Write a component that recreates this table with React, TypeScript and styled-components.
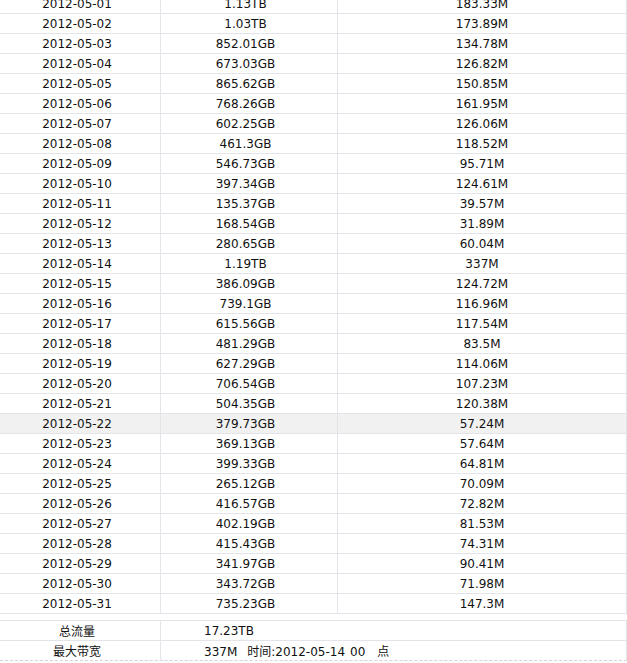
import React from 'react';
import styled, { createGlobalStyle } from 'styled-components';

const lineColor = '#e3e4e9';
const textColor = '#111111';

const GlobalStyle = createGlobalStyle`
    html, body {
        margin: 0;
        padding: 0;
        background: #ffffff;
        overflow: hidden;
    }
`;

const Page = styled.div`
    color: ${textColor};
    font-family: "DejaVu Sans", Verdana, "Noto Sans CJK SC", sans-serif;
    font-size: 12px;
    width: 627px;
`;

// the list is scrolled a few pixels, so the first row is cut at the top
const DailyTable = styled.div`
    margin-top: -6px;
`;

const DailyRow = styled.div<{ $hot?: boolean }>`
    background: ${(p) => (p.$hot ? '#f1f1f1' : 'transparent')};
    border-bottom: 1px solid ${lineColor};
    display: grid;
    grid-template-columns: 161px 177px 1fr;
    height: 19px;
`;

const Cell = styled.div<{ $shift?: number }>`
    border-right: 1px solid ${lineColor};
    line-height: 18px;
    padding-top: 1px;
    padding-right: ${(p) => p.$shift || 0}px;
    text-align: center;
    white-space: nowrap;
`;

const SummaryTable = styled.div`
    border-bottom: 1px dashed #d6d6d6;
    border-top: 1px solid ${lineColor};
    margin-top: 6px;
`;

const SummaryRow = styled.div`
    display: grid;
    grid-template-columns: 161px 1fr;
    height: 19px;

    & + & {
        border-top: 1px solid ${lineColor};
    }
`;

const SummaryLabel = styled(Cell)`
    font-family: "Noto Sans CJK SC", "DejaVu Sans", sans-serif;
    font-size: 12px;
    line-height: 17px;
`;

const SummaryValue = styled.div`
    border-right: 1px solid ${lineColor};
    line-height: 18px;
    padding-left: 43px;
    padding-top: 1px;
    white-space: nowrap;
`;

const Cjk = styled.span`
    font-family: "Noto Sans CJK SC", sans-serif;
`;

const Space = styled.span<{ $w: number }>`
    display: inline-block;
    white-space: pre;
    width: ${(p) => p.$w}px;
`;

const days: [string, string, string][] = [
    ['2012-05-01', '1.13TB', '183.33M'],
    ['2012-05-02', '1.03TB', '173.89M'],
    ['2012-05-03', '852.01GB', '134.78M'],
    ['2012-05-04', '673.03GB', '126.82M'],
    ['2012-05-05', '865.62GB', '150.85M'],
    ['2012-05-06', '768.26GB', '161.95M'],
    ['2012-05-07', '602.25GB', '126.06M'],
    ['2012-05-08', '461.3GB', '118.52M'],
    ['2012-05-09', '546.73GB', '95.71M'],
    ['2012-05-10', '397.34GB', '124.61M'],
    ['2012-05-11', '135.37GB', '39.57M'],
    ['2012-05-12', '168.54GB', '31.89M'],
    ['2012-05-13', '280.65GB', '60.04M'],
    ['2012-05-14', '1.19TB', '337M'],
    ['2012-05-15', '386.09GB', '124.72M'],
    ['2012-05-16', '739.1GB', '116.96M'],
    ['2012-05-17', '615.56GB', '117.54M'],
    ['2012-05-18', '481.29GB', '83.5M'],
    ['2012-05-19', '627.29GB', '114.06M'],
    ['2012-05-20', '706.54GB', '107.23M'],
    ['2012-05-21', '504.35GB', '120.38M'],
    ['2012-05-22', '379.73GB', '57.24M'],
    ['2012-05-23', '369.13GB', '57.64M'],
    ['2012-05-24', '399.33GB', '64.81M'],
    ['2012-05-25', '265.12GB', '70.09M'],
    ['2012-05-26', '416.57GB', '72.82M'],
    ['2012-05-27', '402.19GB', '81.53M'],
    ['2012-05-28', '415.43GB', '74.31M'],
    ['2012-05-29', '341.97GB', '90.41M'],
    ['2012-05-30', '343.72GB', '71.98M'],
    ['2012-05-31', '735.23GB', '147.3M'],
];

const HOVER_DAY = '2012-05-22';

const App = () => {
    return (
        <Page>
            <GlobalStyle />
            <DailyTable>
                {days.map(([day, flow, peak]) => (
                    <DailyRow key={day} $hot={day === HOVER_DAY}>
                        <Cell $shift={6}>{day}</Cell>
                        <Cell $shift={7}>{flow}</Cell>
                        <Cell>{peak}</Cell>
                    </DailyRow>
                ))}
            </DailyTable>
            <SummaryTable>
                <SummaryRow>
                    <SummaryLabel $shift={6}>总流量</SummaryLabel>
                    <SummaryValue>17.23TB</SummaryValue>
                </SummaryRow>
                <SummaryRow>
                    <SummaryLabel $shift={6}>最大带宽</SummaryLabel>
                    <SummaryValue>
                        337M<Space $w={10}>  </Space>
                        <Cjk>时间</Cjk>:2012-05-14<Space $w={5}> </Space>00<Space $w={12}> </Space>
                        <Cjk>点</Cjk>
                    </SummaryValue>
                </SummaryRow>
            </SummaryTable>
        </Page>
    );
};

export default App;
